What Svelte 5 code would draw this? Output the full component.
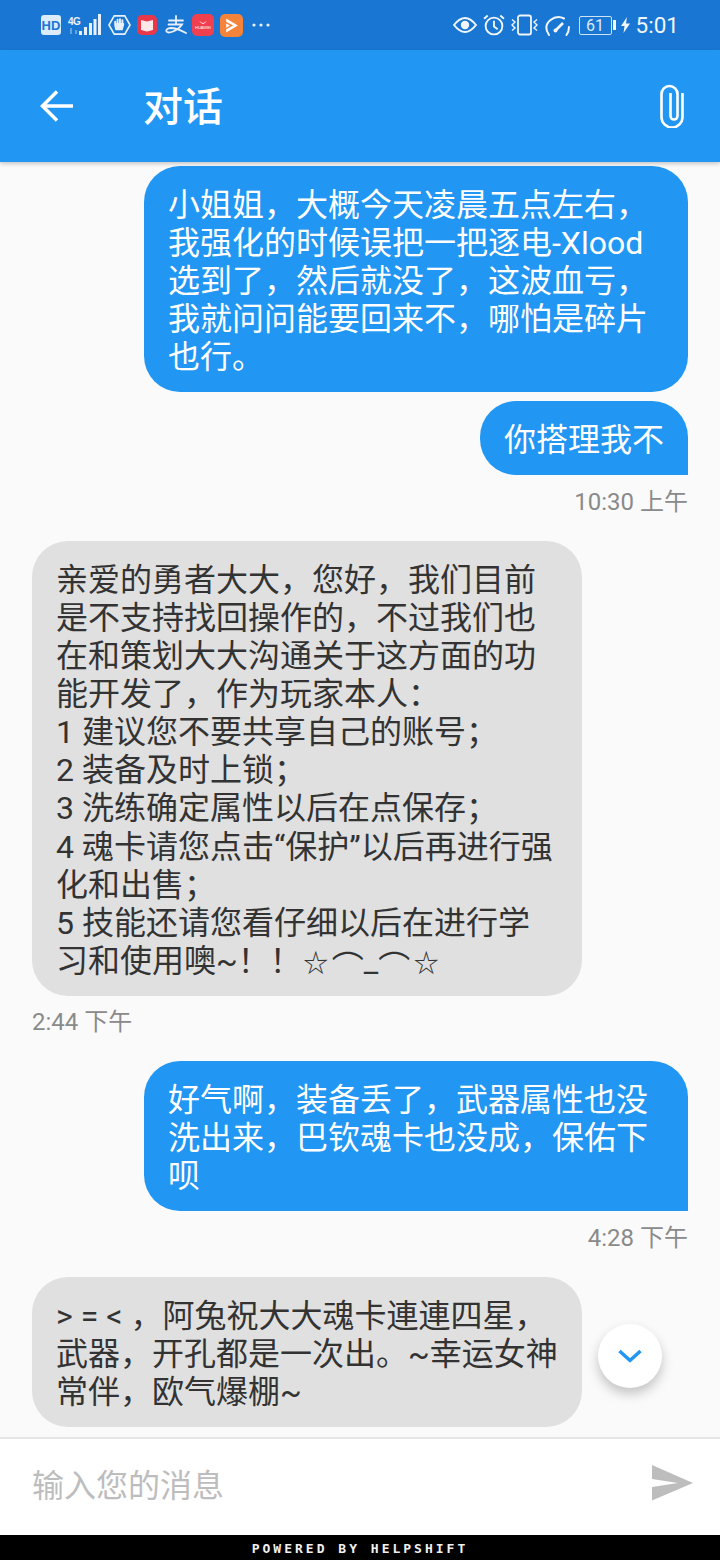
<script lang="ts">
	const messages = [
		{ mine: true, text: '小姐姐，大概今天凌晨五点左右，我强化的时候误把一把逐电-Xlood选到了，然后就没了，这波血亏，我就问问能要回来不，哪怕是碎片也行。' },
		{ mine: true, square: true, text: '你搭理我不', time: '10:30 上午' },
		{
			mine: false,
			text: '亲爱的勇者大大，您好，我们目前是不支持找回操作的，不过我们也在和策划大大沟通关于这方面的功能开发了，作为玩家本人：\n1 建议您不要共享自己的账号；\n2 装备及时上锁；\n3 洗练确定属性以后在点保存；\n4 魂卡请您点击“保护”以后再进行强化和出售；\n5 技能还请您看仔细以后在进行学\n习和使用噢~！！ ',
			face: true,
			time: '2:44 下午'
		},
		{ mine: true, square: true, text: '好气啊，装备丢了，武器属性也没洗出来，巴钦魂卡也没成，保佑下呗', time: '4:28 下午' },
		{ mine: false, text: '> = < ，阿兔祝大大魂卡連連四星，武器，开孔都是一次出。~幸运女神常伴，欧气爆棚~' }
	];
</script>

<div class="screen">
	<div class="status">
		<div class="status-group">
			<svg width="20" height="20" viewBox="0 0 20 20"><rect width="20" height="20" rx="3" fill="#dcebfa" /><text x="10" y="15" class="hd">HD</text></svg>
			<div class="net">
				<span class="net-label">4G</span>
				<svg width="12" height="6" viewBox="0 0 12 6"><path d="M3 0v6M8 6V2" stroke="#7fb2e6" stroke-width="1.5" /></svg>
			</div>
			<svg class="bars" width="22" height="22" viewBox="0 0 22 22" fill="#e8f1fb"><rect x="0" y="17" width="3" height="4" /><rect x="5" y="13" width="3" height="8" /><rect x="10" y="9" width="3" height="12" /><rect x="14.500" y="5" width="3" height="16" /><rect x="19" y="0" width="3" height="21" /></svg>
			<svg class="hand" width="23" height="22" viewBox="0 0 24 22"><path d="M6.500 1.500h11L23 11l-5.500 9.500h-11L1 11z" fill="none" stroke="#e8f1fb" stroke-width="1.700" /><path d="M7.500 11V7.500M10 10V5.500M12.500 10V5M15 10V6M7.500 11l1 4.500h6l1.500-5.500" fill="none" stroke="#e8f1fb" stroke-width="2" stroke-linecap="round" /><rect x="8.500" y="9" width="6.500" height="6" fill="#e8f1fb" /></svg>
			<span class="app-icon book">
				<svg width="14" height="14" viewBox="0 0 14 14"><path d="M1 2l6 1.500L13 2v10l-6 1.500L1 12z" fill="#fde8ea" /></svg>
			</span>
			<svg class="zhi" width="22" height="20" viewBox="0 0 22 20" fill="none" stroke="#e8f1fb" stroke-width="1.800" stroke-linecap="round"><path d="M4 5.500h14M11 1v8M3.500 9.500h13.500Q14 14 8 16.500 3 18.500 1.500 16.500 0.500 13.500 6 13q6 0 15 5" /></svg>
			<span class="app-icon huawei">
				<svg width="8" height="4" viewBox="0 0 8 4"><path d="M1 0.500q3 4 6 0" fill="none" stroke="#fff" stroke-width="0.800" /></svg>
				<span class="huawei-word">HUAWEI</span>
			</span>
			<span class="app-icon video">
				<svg width="17" height="17" viewBox="0 0 16 16"><path d="M3 1.500L14 8 3 14.500v-3L9.500 8 3 4.500z" fill="#fff" /><path d="M3 6L6.500 8 3 10z" fill="#fff" /></svg>
			</span>
			<svg class="dots" width="18" height="4" viewBox="0 0 18 4" fill="#e8f1fb"><circle cx="2" cy="2" r="1.600" /><circle cx="9" cy="2" r="1.600" /><circle cx="16" cy="2" r="1.600" /></svg>
		</div>
		<div class="status-group right">
			<svg width="24" height="16" viewBox="0 0 24 16"><path d="M1 8q11-14 22 0q-11 14-22 0z" fill="none" stroke="#f0f6fc" stroke-width="2" /><circle cx="12" cy="8" r="4.200" fill="#f0f6fc" /></svg>
			<svg width="22" height="22" viewBox="0 0 21 21" fill="none" stroke="#f0f6fc" stroke-width="1.800"><circle cx="10.500" cy="11.500" r="8" /><path d="M10.500 6.500v5.500l3.500 2.500M1 4.500L4.500 1.500M20 4.500L16.500 1.500" /></svg>
			<svg width="27" height="22" viewBox="0 0 27 21" fill="none" stroke="#f0f6fc" stroke-width="1.800"><rect x="7" y="1" width="13" height="19" rx="2" /><path d="M1 5l3 2.500-3 3 3 3-3 2.500M26 5l-3 2.500 3 3-3 3 3 2.500" stroke-width="1.400" /></svg>
			<svg width="26" height="21" viewBox="0 0 26 21" fill="none" stroke="#f0f6fc" stroke-width="2"><path d="M5 20Q-1 11 6.500 5 13 0 20 3.500M25 12q0 4.500-2.500 8" stroke-linecap="round" /><path d="M11.500 15.500L19 8" stroke-width="2.600" /><circle cx="11.500" cy="15.500" r="2" fill="#f0f6fc" stroke="none" /></svg>
			<span class="battery"><span class="battery-level">61</span></span>
			<span class="battery-cap"></span>
			<svg class="bolt" width="9" height="16" viewBox="0 0 9 16"><path d="M6 0L0 9h3.500L2.500 16 9 6.500H5z" fill="#f0f6fc" /></svg>
			<span class="clock">5:01</span>
		</div>
	</div>

	<header class="toolbar">
		<svg class="back" width="33" height="32" viewBox="0 0 33 32" fill="none" stroke="#fff" stroke-width="3.500"><path d="M33 16H2M17 1.500L2.500 16 17 30.500" /></svg>
		<h1>对话</h1>
		<svg class="clip" width="24" height="44" viewBox="0 0 24 44" fill="none" stroke="#fff" stroke-width="2.600"><path d="M22.500 9v24a10.500 10.500 0 0 1-21 0V10a8 8 0 0 1 16 0v22a3.500 3.500 0 0 1-7 0V9" /></svg>
	</header>

	<main class="list">
		{#each messages as m}
			<div class="row" class:mine={m.mine}>
				<div class="bubble" class:square={m.square}>{m.text}{#if m.face}<span class="face"><span class="star">☆</span><span class="arc">⌒</span>_<span class="arc">⌒</span><span class="star">☆</span></span>{/if}</div>
				{#if m.time}
					<div class="time">{m.time}</div>
				{/if}
			</div>
		{/each}

		<button class="fab" aria-label="scroll to bottom">
			<svg width="24" height="14" viewBox="0 0 24 14" fill="none" stroke="#2196f3" stroke-width="3.500"><path d="M1.500 2l10.500 9.500L22.500 2" /></svg>
		</button>
	</main>

	<div class="composer">
		<span class="placeholder">输入您的消息</span>
		<svg class="send" width="42" height="36" viewBox="0 0 42 36"><path d="M0 0l41 18L0 35.500V22l26-4L0 14z" fill="#bdbdbd" /></svg>
	</div>

	<footer class="powered">POWERED BY HELPSHIFT</footer>
</div>

<style>
	:global(body) {
		margin: 0;
	}

	.screen {
		width: 720px;
		height: 1560px;
		display: flex;
		flex-direction: column;
		background: #fafafa;
		font-family: Roboto, 'Noto Sans CJK SC', sans-serif;
		overflow: hidden;
	}

	.status {
		height: 50px;
		flex: none;
		background: #1976d2;
		display: flex;
		align-items: center;
		justify-content: space-between;
		padding: 0 41px;
		color: #f0f6fc;
	}

	.status-group {
		display: flex;
		align-items: center;
	}

	.status-group.right {
		gap: 6px;
	}

	.hd {
		font: bold 13px 'Liberation Sans', sans-serif;
		fill: #1976d2;
		text-anchor: middle;
	}

	.net {
		width: 12px;
		margin-left: 7px;
		display: flex;
		flex-direction: column;
	}

	.net-label {
		font: bold 10px/12px 'Liberation Sans', sans-serif;
		letter-spacing: -0.500px;
		white-space: nowrap;
		color: #e8f1fb;
	}

	.bars {
		margin-left: -1px;
	}

	.hand {
		margin-left: 7px;
	}

	.app-icon {
		width: 22px;
		height: 22px;
		border-radius: 5px;
		display: flex;
		flex-direction: column;
		align-items: center;
		justify-content: center;
	}

	.book {
		width: 20px;
		height: 20px;
		margin-left: 6px;
		background: #e8384a;
	}

	.zhi {
		margin-left: 8px;
	}

	.huawei {
		margin-left: 5px;
		background: #f04050;
	}

	.huawei-word {
		font: 4px/5px 'Liberation Sans', sans-serif;
		color: #fff;
	}

	.video {
		width: 23px;
		height: 23px;
		margin-left: 6px;
		background: #f5833a;
	}

	.dots {
		margin-left: 9px;
	}

	.battery {
		width: 31px;
		height: 17px;
		margin-left: 3px;
		border: 1px solid #cfe2f6;
		border-radius: 2px;
		display: flex;
		align-items: center;
		justify-content: center;
	}

	.battery-level {
		font-size: 16px;
		line-height: 17px;
		color: #dcebfa;
	}

	.battery-cap {
		width: 3px;
		height: 10px;
		margin-left: -5px;
		background: #f0f6fc;
	}

	.bolt {
		margin-left: -1px;
	}

	.clock {
		font-size: 22.500px;
		color: #f0f6fc;
	}

	.toolbar {
		height: 112px;
		flex: none;
		background: #2196f3;
		display: flex;
		align-items: center;
		padding: 0 36px 0 40px;
		color: #fff;
		box-shadow: 0 2px 4px rgba(0, 0, 0, 0.2);
		position: relative;
		z-index: 1;
	}

	.toolbar h1 {
		margin: 4px 0 0 70px;
		font-size: 40px;
		font-weight: 500;
		line-height: 50px;
		flex: 1;
	}

	.list {
		flex: 1;
		min-height: 0;
		position: relative;
		padding: 4px 32px 0;
		display: flex;
		flex-direction: column;
	}

	.row {
		display: flex;
		flex-direction: column;
		align-items: flex-start;
		margin-bottom: 9px;
	}

	.row.mine {
		align-items: flex-end;
	}

	.bubble {
		box-sizing: border-box;
		width: 550px;
		padding: 20px 20px 15.900px 24px;
		border-radius: 36px;
		background: #e0e0e0;
		color: #333;
		font-size: 32px;
		line-height: 38.100px;
		white-space: pre-line;
	}

	.mine .bubble {
		width: 544px;
		padding: 20px 24px 15.900px;
		background: #2196f3;
		color: #fff;
	}

	.mine .bubble.square {
		border-bottom-right-radius: 0;
		width: fit-content;
		max-width: 544px;
	}

	.face {
		margin-left: -10px;
	}

	.star {
		display: inline-block;
		width: 32px;
		font-size: 25px;
		line-height: 20px;
		text-align: center;
	}

	.arc {
		display: inline-block;
		width: 32px;
		line-height: 20px;
		text-align: center;
		vertical-align: -7px;
	}

	.time {
		margin-top: 12.500px;
		margin-bottom: 16px;
		font-size: 24px;
		line-height: 28px;
		color: #8a8a8a;
	}

	.fab {
		position: absolute;
		top: 1162px;
		left: 598px;
		width: 64px;
		height: 64px;
		padding: 0;
		border: none;
		border-radius: 50%;
		background: #fff;
		box-shadow: 0 6px 12px rgba(0, 0, 0, 0.22);
		display: flex;
		align-items: center;
		justify-content: center;
	}

	.composer {
		box-sizing: border-box;
		height: 98px;
		flex: none;
		border-top: 2px solid #e6e6e6;
		background: #fff;
		display: flex;
		align-items: center;
		justify-content: space-between;
		padding: 0 26px 8px 32px;
	}

	.placeholder {
		font-size: 32px;
		color: #bdbdbd;
	}

	.powered {
		height: 25px;
		flex: none;
		background: #000;
		color: #f0f0f0;
		text-align: center;
		font: bold 13px/27px 'DejaVu Sans Mono', monospace;
		letter-spacing: 3px;
	}
</style>
